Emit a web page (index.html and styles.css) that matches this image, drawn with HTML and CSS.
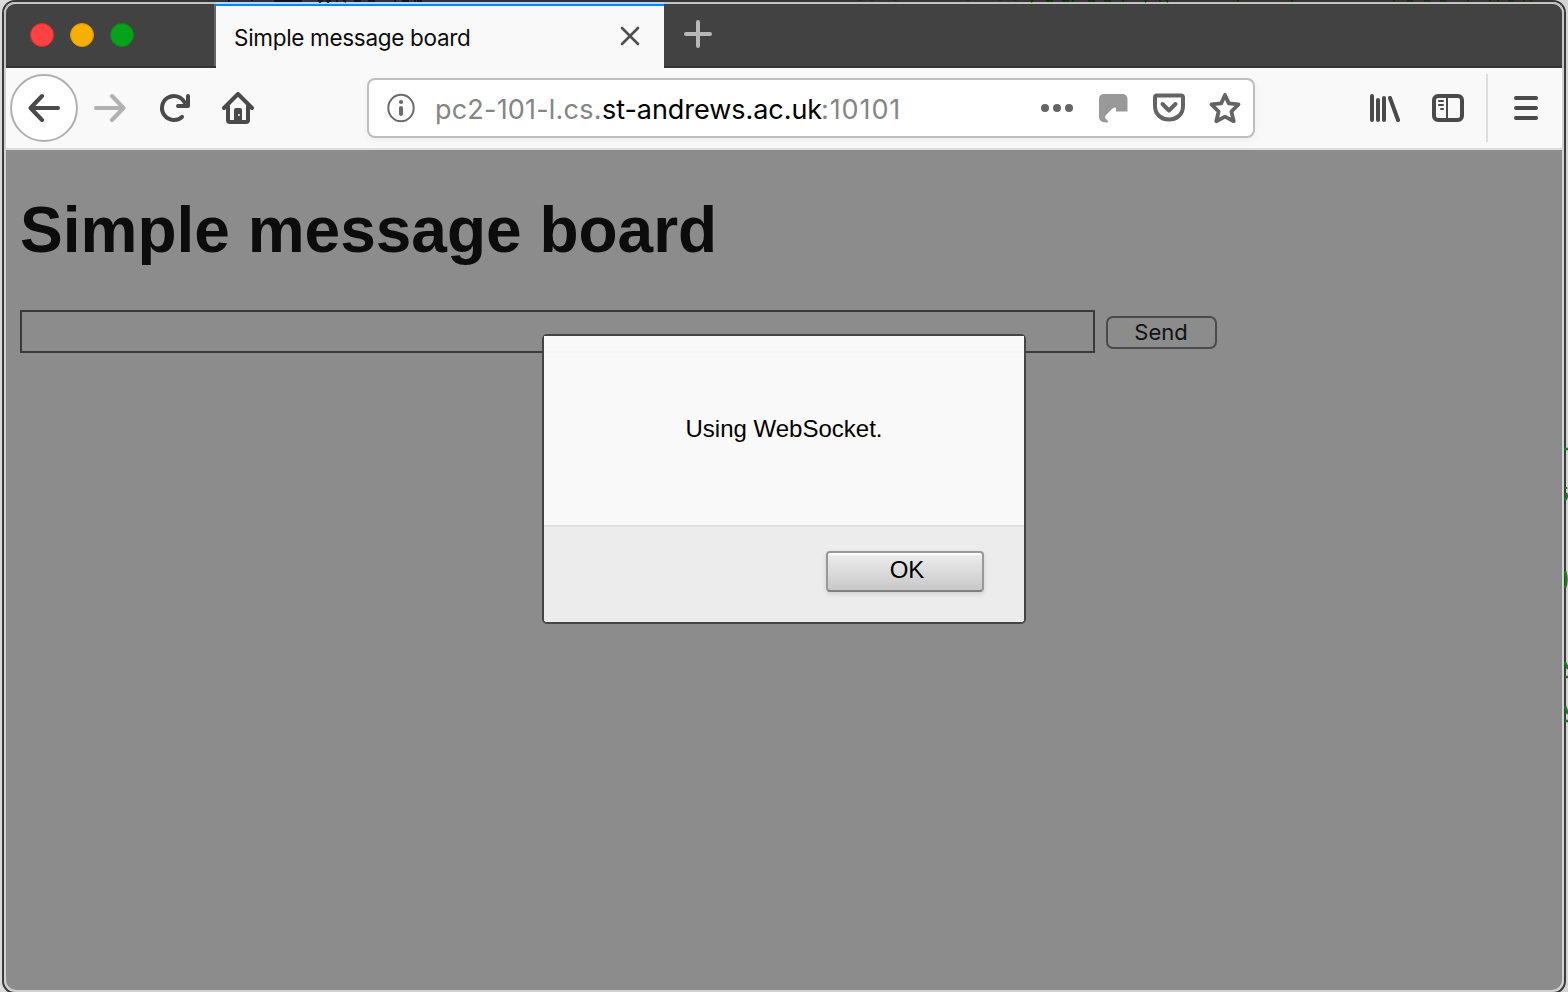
FILE: index.html
```html
<!DOCTYPE html>
<html lang="en">
<head>
<meta charset="utf-8">
<title>Simple message board</title>
<link rel="stylesheet" href="styles.css">
</head>
<body>
<div class="window">
  <header class="tabbar">
    <div class="lights"><i class="light red"></i><i class="light amber"></i><i class="light green"></i></div>
    <div class="tab">
      <span class="tab-title">Simple message board</span>
      <svg class="tab-close" viewBox="0 0 20 20"><path d="M2 2 18 18M18 2 2 18" fill="none" stroke="#505050" stroke-width="2.6" stroke-linecap="round"/></svg>
    </div>
    <svg class="newtab" viewBox="0 0 28 28"><path d="M14 2V26M2 14H26" fill="none" stroke="#b8b8b8" stroke-width="4" stroke-linecap="round"/></svg>
  </header>
  <nav class="toolbar">
    <div class="back"><svg width="32" height="32" viewBox="0 0 32 32"><path d="M14 4 2.500 16 14 28M3 16H30" fill="none" stroke="#4a4a4a" stroke-width="4" stroke-linecap="round" stroke-linejoin="round"/></svg></div>
    <svg class="forward" width="32" height="32" viewBox="0 0 32 32"><path d="M18 4 29.500 16 18 28M29 16H2" fill="none" stroke="#b1b1b1" stroke-width="4" stroke-linecap="round" stroke-linejoin="round"/></svg>
    <svg class="reload" width="32" height="32" viewBox="0 0 32 32"><path d="M24 24.900A12 12 0 1 1 26.500 10.200" fill="none" stroke="#4a4a4a" stroke-width="4" stroke-linecap="round"/><path d="M30 4V14H20" fill="none" stroke="#4a4a4a" stroke-width="4" stroke-linecap="round" stroke-linejoin="round"/></svg>
    <svg class="home" width="32" height="32" viewBox="0 0 32 32"><path d="M2 16 16 2 30 16M6 14V28Q6 30 8 30H24Q26 30 26 28V14" fill="none" stroke="#4a4a4a" stroke-width="4" stroke-linecap="round" stroke-linejoin="round"/><path d="M12 30V18Q12 16 14 16H18Q20 16 20 18V30Z" fill="#4a4a4a"/><circle cx="17" cy="23" r="1" fill="#f9f9fa"/></svg>
    <div class="urlbar">
      <svg class="info" width="28" height="30" viewBox="0 0 28 30"><ellipse cx="14" cy="15" rx="12.700" ry="13.200" fill="none" stroke="#6b6b6b" stroke-width="2"/><circle cx="14" cy="9" r="2.100" fill="#6b6b6b"/><path d="M14 15V21" stroke="#6b6b6b" stroke-width="4" stroke-linecap="round"/></svg>
      <div class="url"><span class="u1">pc2-101-l.cs.</span><span class="u2">st-andrews.ac.uk</span><span class="u3">:10101</span></div>
      <div class="actions">
        <svg width="32" height="32" viewBox="0 0 32 32" fill="#646464"><circle cx="4" cy="16" r="4"/><circle cx="16" cy="16" r="4"/><circle cx="28" cy="16" r="4"/></svg>
        <svg width="32" height="32" viewBox="0 0 32 32"><path d="M2 25V7Q2 2 7 2H25Q30.500 2 30.500 7.500V19.500H19V16Q17.500 14.500 15 17L9 23Q7 25.500 9 27L11.500 29.500Q11 30.500 9 30.500Q2 30 2 25Z" fill="#999"/></svg>
        <svg width="32" height="32" viewBox="0 0 32 32"><path d="M4 3.500H28Q30 3.500 30 5.500V14C30 23 23 27.500 16 27.500S2 23 2 14V5.500Q2 3.500 4 3.500Z" fill="none" stroke="#646464" stroke-width="4"/><path d="M9.500 12 16 18.500 22.500 12" fill="none" stroke="#646464" stroke-width="4" stroke-linecap="round" stroke-linejoin="round"/></svg>
        <svg width="32" height="32" viewBox="0 0 32 32"><path d="M16 3 19.800 11.400 29.500 12.400 22.400 19.500 24.700 29.200 16 24.600 7.300 29.200 9.600 19.500 2.500 12.400 12.200 11.400Z" fill="none" stroke="#646464" stroke-width="3.800" stroke-linejoin="round"/></svg>
      </div>
    </div>
    <svg class="library" width="32" height="32" viewBox="0 0 32 32"><path d="M4 4V28M10 8V28M16 6V28M22 6 30 28" fill="none" stroke="#4a4a4a" stroke-width="4" stroke-linecap="round"/></svg>
    <svg class="sidebar" width="32" height="32" viewBox="0 0 32 32"><rect x="2" y="4" width="28" height="24" rx="4" fill="none" stroke="#4a4a4a" stroke-width="4"/><path d="M15 4V28M7 9H11M7 13H11M9 17H11" fill="none" stroke="#4a4a4a" stroke-width="2" stroke-linecap="round"/></svg>
    <i class="divider"></i>
    <svg class="menu" width="24" height="28" viewBox="0 0 24 28"><path d="M2 4H22M2 14H22M2 24H22" stroke="#4a4a4a" stroke-width="4" stroke-linecap="round"/></svg>
  </nav>
  <main class="page">
    <h1>Simple message board</h1>
    <div class="form"><div class="field"></div><div class="send">Send</div></div>
    <section class="dialog">
      <div class="message"><span>Using WebSocket.</span></div>
      <footer class="dialog-foot"><div class="ok"><span>OK</span></div></footer>
    </section>
  </main>
</div>
<svg class="backdrop" width="1568" height="992" viewBox="0 0 1568 992">
  <path d="M228 0H230V2H228ZM251 0H253V1H251ZM274 0H302V2H274Z" fill="#111"/>
  <path d="M318 0 320 2 323 0M326 0 328 2 331 0M337 0V2M343 0 346 2M354 1H361M368 1H375M395 0V2M402 1H409M415 0V2M417 1H422" fill="none" stroke="#151515" stroke-width="2"/>
  <path d="M860 0V1M872 0V1M895 0V1M968 0V1M1000 0V1M1015 0V1" stroke="#292929" stroke-width="4"/>
  <path d="M1033 0 1031 2M1046 1H1053M1062 1H1069M1073 0V2M1088 1H1095M1104 1H1111M1123 0V2M1147 0 1145 2M1160 0V2M1166 0 1168 2M1238 0V2M1292 0V2" fill="none" stroke="#0f300f" stroke-width="2"/>
  <path d="M1394 0V2M1407 1H1413M1424 1H1430M1440 1H1446M1468 0V2M1490 0V2M1498 0V2M1508 1H1514M1524 0V2M1531 0V2" fill="none" stroke="#1d2a1d" stroke-width="2"/>
  <path d="M1564 449H1568M1566 487V489M1566 493Q1568 497 1565 500M1565 571Q1568 580 1565 588M1565 662 1568 669M1565 677H1568M1565 706 1568 714M1565 721H1568" fill="none" stroke="#1d7a22" stroke-width="2.500"/>
</svg>
</body>
</html>
```
FILE: styles.css
```css
* { box-sizing: border-box; }
html { overflow: hidden; }
body {
  margin: 0;
  width: 1568px;
  height: 992px;
  padding: 0 2px;
  background: linear-gradient(90deg, #dcdcdc, #d4d4d4);
  overflow: hidden;
  font-family: Inter, "Liberation Sans", sans-serif;
}
svg { display: block; flex: none; }
.window {
  width: 1564px;
  height: 994px;
  border: 2px solid #3b3b3b;
  border-top-color: #343434;
  border-radius: 13px;
  padding: 0;
  display: flex;
  flex-direction: column;
  background: #d2d2d2;
  overflow: hidden;
}
.tabbar {
  height: 66px;
  flex: none;
  display: flex;
  border: 2px solid #c5c4c3;
  border-bottom: 0;
  border-radius: 11px 11px 0 0;
  background: linear-gradient(#424242 0 62px, #353232 62px);
}
.lights {
  width: 210px;
  height: 62px;
  border-right: 2px solid #666;
  display: flex;
  gap: 16px;
  padding: 19px 0 0 24px;
}
.light { width: 24px; height: 24px; border-radius: 50%; border: 1px solid; }
.red { background: #ff4141; border-color: #de2d2b; }
.amber { background: #f7b000; border-color: #dc9800; }
.green { background: #05a31b; border-color: #088912; }
.tab {
  width: 448px;
  height: 64px;
  background: #f9f9f9;
  border-top: 2px solid #0a84ff;
  box-shadow: 0 -2px #b0d8ff;
  display: flex;
  justify-content: space-between;
  padding: 0 24px 0 18px;
}
.tab-title {
  font-size: 22.5px;
  letter-spacing: -0.31px;
  line-height: 28px;
  margin-top: 18px;
  white-space: nowrap;
  color: #0c0c0d;
}
.tab-close { width: 20px; height: 20px; margin-top: 20px; }
.newtab { width: 28px; height: 28px; margin: 16px 0 0 20px; }
.toolbar {
  height: 82px;
  flex: none;
  margin: 0 2px;
  background: #f9f9f9;
  border-bottom: 2px solid #ddd;
  display: flex;
  align-items: center;
  padding-left: 4px;
}
.back {
  width: 68px;
  height: 68px;
  border: 2px solid #b0b0b0;
  border-radius: 50%;
  background: #fff;
  display: grid;
  place-items: center;
}
.forward { margin-left: 16px; }
.reload { margin-left: 32px; }
.home { margin-left: 32px; }
.urlbar {
  width: 888px;
  height: 60px;
  margin-left: 113px;
  border: 2px solid #bebebe;
  border-radius: 8px;
  background: #fff;
  box-shadow: 0 2px 8px rgba(0, 0, 0, .05);
  display: flex;
  align-items: center;
  padding: 0 12px 0 18px;
}
.url {
  display: flex;
  margin-left: 20px;
  font-size: 27px;
  line-height: 36px;
  white-space: nowrap;
  padding-top: 4px;
}
.u1, .u3 { color: #858585; }
.u1 { width: 167px; letter-spacing: 0.2px; }
.u2 { width: 219px; color: #000; letter-spacing: -0.05px; }
.u3 { letter-spacing: 0.9px; }
.actions { margin-left: auto; display: flex; gap: 24px; }
.library { margin-left: 113px; }
.sidebar { margin-left: 32px; }
.divider { width: 2px; height: 68px; margin-left: 22px; background: #ddd; }
.menu { margin-left: 26px; }
.page {
  position: relative;
  height: 840px;
  flex: none;
  margin: 0 2px;
  background: #8c8c8c;
  border-radius: 0 0 10px 10px;
  padding: 44px 0 0 14px;
}
h1 {
  margin: 0;
  font: bold 64px/72px "Liberation Sans", Arial, sans-serif;
  color: #0c0c0c;
  white-space: nowrap;
}
.form { display: flex; margin-top: 44px; }
.field { width: 1075px; height: 43px; border: 2px solid #3a3a3a; }
.send {
  width: 111px;
  height: 33px;
  margin: 6px 0 0 10.5px;
  border: 2px solid #4a4a4a;
  border-radius: 7px;
  color: #111;
  font-size: 22px;
  line-height: 28px;
  text-align: center;
}
.dialog {
  position: absolute;
  left: 536px;
  top: 184px;
  width: 484px;
  height: 290px;
  border: 2px solid #454545;
  border-radius: 5px;
  background: #f9f9f9;
  display: flex;
  flex-direction: column;
  font-family: "Liberation Sans", Arial, sans-serif;
  font-size: 24px;
  color: #000;
}
.message {
  height: 189px;
  line-height: 28px;
  padding-top: 79px;
  text-align: center;
  background: linear-gradient(#f9f9f9 15px, #f5f5f5 15px 17px, #f9f9f9 17px);
}
.dialog-foot {
  flex: 1;
  border-top: 2px solid #dfdfdf;
  border-radius: 0 0 3px 3px;
  background: #ececec;
  display: flex;
  justify-content: flex-end;
  padding: 24px 40px 0 0;
}
.ok {
  width: 158px;
  height: 41px;
  border: 2px solid #999;
  border-bottom-color: #808080;
  border-radius: 4px;
  background: linear-gradient(#fff 0 2px, #ececec 2px, #c8c8c8);
  box-shadow: 0 2px 5px rgba(0, 0, 0, .12);
  text-align: center;
  line-height: 34px;
  padding-left: 4px;
}
.backdrop { position: absolute; left: 0; top: 0; pointer-events: none; }
```
